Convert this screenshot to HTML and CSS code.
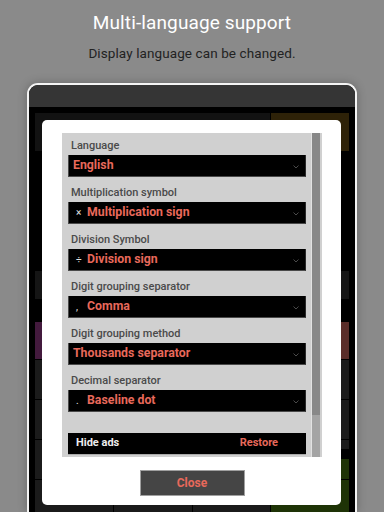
FILE: index.html
```html
<!DOCTYPE html>
<html lang="en">
<head>
<meta charset="utf-8">
<title>Multi-language support</title>
<link rel="stylesheet" href="styles.css">
</head>
<body>
<header class="hdr">
  <h1 class="title">Multi-language support</h1>
  <p class="sub">Display language can be changed.</p>
</header>

<div class="phone">
  <div class="topbar"></div>
  <div class="screen">
    <div class="cell span3 c-dark"></div>
    <div class="cell c-brown"></div>
    <div class="display"></div>
    <div class="cell span4 c-row"></div>
    <div class="spacer"></div>
    <div class="cell c-purple"></div>
    <div class="cell c-key"></div>
    <div class="cell c-key"></div>
    <div class="cell c-red"></div>
    <div class="cell c-key"></div>
    <div class="cell c-key"></div>
    <div class="cell c-key"></div>
    <div class="cell c-key"></div>
    <div class="cell c-key"></div>
    <div class="cell c-key"></div>
    <div class="cell c-key"></div>
    <div class="cell c-key"></div>
    <div class="cell c-key"></div>
    <div class="cell c-key"></div>
    <div class="cell c-key"></div>
    <div class="cell c-mix"></div>
    <div class="cell c-key"></div>
    <div class="cell c-key"></div>
    <div class="cell c-key"></div>
    <div class="cell c-green"></div>
  </div>
</div>

<div class="dialog">
  <div class="panel">
    <div class="list">
      <div class="item first">
        <div class="label">Language</div>
        <div class="select"><span class="val">English</span><svg class="chev" width="6" height="4" viewBox="0 0 6 4"><polyline points="0.5,0.5 3,3 5.5,0.5" fill="none" stroke="#4a4a4a" stroke-width="1"/></svg></div>
      </div>
      <div class="item">
        <div class="label">Multiplication symbol</div>
        <div class="select"><span class="sym">×</span><span class="val">Multiplication sign</span><svg class="chev" width="6" height="4" viewBox="0 0 6 4"><polyline points="0.5,0.5 3,3 5.5,0.5" fill="none" stroke="#4a4a4a" stroke-width="1"/></svg></div>
      </div>
      <div class="item">
        <div class="label">Division Symbol</div>
        <div class="select"><span class="sym">÷</span><span class="val">Division sign</span><svg class="chev" width="6" height="4" viewBox="0 0 6 4"><polyline points="0.5,0.5 3,3 5.5,0.5" fill="none" stroke="#4a4a4a" stroke-width="1"/></svg></div>
      </div>
      <div class="item">
        <div class="label">Digit grouping separator</div>
        <div class="select"><span class="sym">,</span><span class="val">Comma</span><svg class="chev" width="6" height="4" viewBox="0 0 6 4"><polyline points="0.5,0.5 3,3 5.5,0.5" fill="none" stroke="#4a4a4a" stroke-width="1"/></svg></div>
      </div>
      <div class="item">
        <div class="label">Digit grouping method</div>
        <div class="select"><span class="val">Thousands separator</span><svg class="chev" width="6" height="4" viewBox="0 0 6 4"><polyline points="0.5,0.5 3,3 5.5,0.5" fill="none" stroke="#4a4a4a" stroke-width="1"/></svg></div>
      </div>
      <div class="item">
        <div class="label">Decimal separator</div>
        <div class="select"><span class="sym">.</span><span class="val">Baseline dot</span><svg class="chev" width="6" height="4" viewBox="0 0 6 4"><polyline points="0.5,0.5 3,3 5.5,0.5" fill="none" stroke="#4a4a4a" stroke-width="1"/></svg></div>
      </div>
      <div class="ads">
        <span class="ads-label">Hide ads</span>
        <span class="ads-restore">Restore</span>
      </div>
    </div>
    <div class="scroll"><div class="thumb"></div></div>
  </div>
  <div class="actions">
    <button class="close">Close</button>
  </div>
</div>
</body>
</html>
```

FILE: styles.css
```css
* { box-sizing: border-box; }

html, body {
  margin: 0;
  padding: 0;
}

body {
  width: 384px;
  height: 512px;
  overflow: hidden;
  position: relative;
  background: #8a8a8a;
  font-family: Roboto, "Liberation Sans", sans-serif;
}

.hdr {
  height: 83px;
  text-align: center;
  padding-top: 11px;
}

.title {
  margin: 0;
  font-family: Roboto, "Noto Sans", sans-serif;
  font-weight: 400;
  font-size: 19px;
  line-height: 24px;
  color: #ffffff;
  letter-spacing: 0.12px;
}

.sub {
  margin: 9px 0 0;
  font-family: Roboto, "Noto Sans", sans-serif;
  font-size: 13.5px;
  line-height: 18px;
  color: #222222;
  letter-spacing: 0.1px;
}

.phone {
  margin-left: 27px;
  width: 330px;
  height: 429px;
  border: 2px solid #f4f4f4;
  border-bottom: none;
  border-radius: 11px 11px 0 0;
  background: #000;
  overflow: hidden;
  box-shadow: 0 0 10px rgba(0, 0, 0, 0.25);
}

.topbar {
  height: 22px;
  background: #353535;
}

.screen {
  padding: 6px 6px 0;
  display: grid;
  grid-template-columns: repeat(4, 1fr);
  grid-template-rows: 38px 118px 28px 21px 37px 39px 39px 39px 39px;
  gap: 1px;
}

.cell { background: #1a1a1a; }
.span3 { grid-column: span 3; }
.span4 { grid-column: span 4; }
.c-dark { background: #121212; }
.c-brown { background: #2e2208; }
.c-row { background: #151515; }
.c-key { background: #1b1b1b; }
.c-purple { background: #431a3d; }
.c-red { background: #5a2d29; }
.c-green { background: #1e3306; }
.c-mix { background: linear-gradient(#1b1b1b 0 9px, #000 9px 19px, #1e3306 19px); }
.display { grid-column: span 4; }
.spacer { grid-column: span 4; }

.dialog {
  position: absolute;
  left: 42px;
  top: 120px;
  width: 299px;
  height: 385px;
  background: #ffffff;
  border-radius: 5px;
  padding: 13px 19px 0 20px;
}

.panel {
  height: 324px;
  display: flex;
  background: #d0d0d0;
  overflow: hidden;
}

.list {
  width: 250px;
  padding: 0 5px 0 6px;
  border-right: 1px solid #e2e2e2;
}

.item { display: flex; flex-direction: column; }

.label {
  height: 25px;
  display: flex;
  align-items: flex-end;
  padding: 0 0 3px 3px;
  font-size: 11px;
  line-height: 13px;
  font-weight: 500;
  color: #4a4a4a;
}

.first .label { height: 22px; }

.select {
  height: 22px;
  display: flex;
  align-items: center;
  background: #000;
  border: 1px solid #4a4a4a;
  border-top: none;
  border-right-color: #2a2a2a;
  padding: 0 0 1px 4px;
  position: relative;
}

.val {
  font-size: 12.3px;
  font-weight: 700;
  color: #e8695b;
  line-height: 19px;
}

.sym {
  width: 14px;
  padding-left: 3px;
  font-size: 10px;
  line-height: 19px;
  color: #e6e6e6;
}

.chev {
  position: absolute;
  right: 6px;
  top: 10px;
}

.ads {
  margin-top: 21px;
  height: 22px;
  display: flex;
  justify-content: space-between;
  align-items: center;
  background: #000;
  border-bottom: 1px solid #aaaaaa;
  padding: 0 28px 1px 8px;
  font-size: 11px;
  font-weight: 700;
  line-height: 14px;
}

.ads-label { color: #eeeeee; }
.ads-restore { color: #e8695b; }

.scroll {
  width: 8px;
  background: #a4a4a4;
}

.thumb {
  height: 282px;
  background: #888888;
}

.actions {
  display: flex;
  justify-content: center;
  padding-top: 13px;
}

.close {
  width: 105px;
  height: 26px;
  background: #454545;
  border: 1px solid #a0a0a0;
  border-radius: 0;
  font-family: Roboto, "Liberation Sans", sans-serif;
  font-size: 12px;
  font-weight: 700;
  color: #e8695b;
  padding: 0;
}
```
